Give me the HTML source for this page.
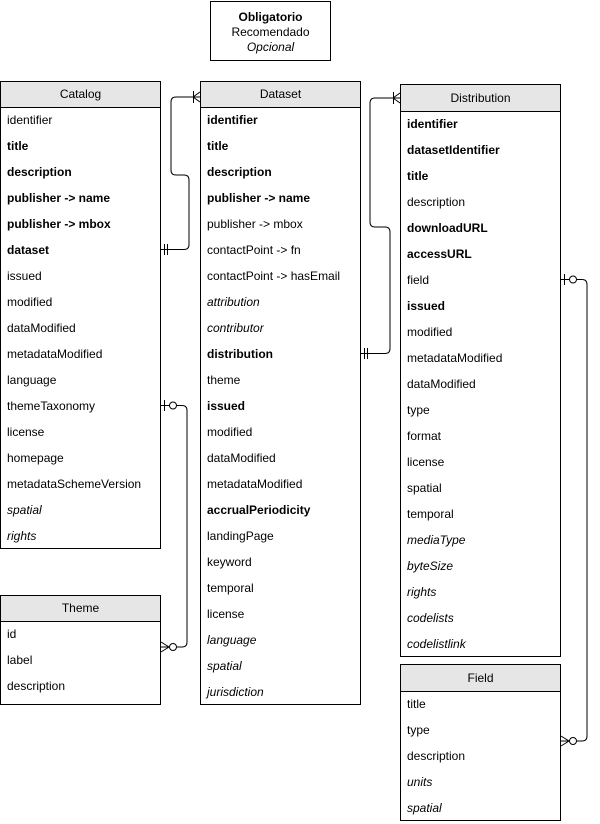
<!DOCTYPE html>
<html><head><meta charset="utf-8"><style>
body{margin:0;width:600px;height:824px;background:#fff;position:relative;font-family:"Liberation Sans",Arial,sans-serif;font-size:12px;color:#000;overflow:hidden}
.t{position:absolute;border:1px solid #000;background:#fff;box-sizing:border-box}
.h{height:25px;line-height:25px;text-align:center;background:#e6e6e6;border-bottom:1px solid #000;font-size:12px}
.r{height:26px;line-height:24px;padding-left:6px;white-space:nowrap}
.b{font-weight:bold}.i{font-style:italic}
.leg{position:absolute;left:210px;top:1px;width:121px;height:60px;border:1px solid #000;box-sizing:border-box;text-align:center;line-height:15px;padding-top:8px}
svg{position:absolute;left:0;top:0}
</style></head><body>
<div class="leg"><div class="b">Obligatorio</div><div>Recomendado</div><div class="i">Opcional</div></div>

<div class="t" style="left:0;top:81px;width:161px;height:468px"><div class="h">Catalog</div>
<div class="r">identifier</div><div class="r b">title</div><div class="r b">description</div><div class="r b">publisher -&gt; name</div><div class="r b">publisher -&gt; mbox</div><div class="r b">dataset</div><div class="r">issued</div><div class="r">modified</div><div class="r">dataModified</div><div class="r">metadataModified</div><div class="r">language</div><div class="r">themeTaxonomy</div><div class="r">license</div><div class="r">homepage</div><div class="r">metadataSchemeVersion</div><div class="r i">spatial</div><div class="r i">rights</div></div>

<div class="t" style="left:0;top:595px;width:161px;height:110px"><div class="h">Theme</div>
<div class="r">id</div><div class="r">label</div><div class="r">description</div></div>

<div class="t" style="left:200px;top:81px;width:161px;height:624px"><div class="h">Dataset</div>
<div class="r b">identifier</div><div class="r b">title</div><div class="r b">description</div><div class="r b">publisher -&gt; name</div><div class="r">publisher -&gt; mbox</div><div class="r">contactPoint -&gt; fn</div><div class="r">contactPoint -&gt; hasEmail</div><div class="r i">attribution</div><div class="r i">contributor</div><div class="r b">distribution</div><div class="r">theme</div><div class="r b">issued</div><div class="r">modified</div><div class="r">dataModified</div><div class="r">metadataModified</div><div class="r b">accrualPeriodicity</div><div class="r">landingPage</div><div class="r">keyword</div><div class="r">temporal</div><div class="r">license</div><div class="r i">language</div><div class="r i">spatial</div><div class="r i">jurisdiction</div></div>

<div class="t" style="left:400px;top:84px;width:161px;height:573px"><div class="h" style="height:26px;line-height:26px">Distribution</div>
<div class="r b">identifier</div><div class="r b">datasetIdentifier</div><div class="r b">title</div><div class="r">description</div><div class="r b">downloadURL</div><div class="r b">accessURL</div><div class="r">field</div><div class="r b">issued</div><div class="r">modified</div><div class="r">metadataModified</div><div class="r">dataModified</div><div class="r">type</div><div class="r">format</div><div class="r">license</div><div class="r">spatial</div><div class="r">temporal</div><div class="r i">mediaType</div><div class="r i">byteSize</div><div class="r i">rights</div><div class="r i">codelists</div><div class="r i">codelistlink</div></div>

<div class="t" style="left:400px;top:664px;width:161px;height:157px"><div class="h" style="height:26px;line-height:26px">Field</div>
<div class="r">title</div><div class="r">type</div><div class="r">description</div><div class="r i">units</div><div class="r i">spatial</div></div>

<svg width="600" height="824" fill="none" stroke="#000" stroke-width="1">
<path d="M161,249.5 H184 q5,0 5,-5 V180 q0,-5 -5,-5 H176 q-5,0 -5,-5 V102 q0,-5 5,-5 H200"/>
<path d="M164.5,244 v11 M167.5,244 v11"/>
<path d="M193.5,91 v12 M193,97 L200,92 M193,97 L200,102"/>
<path d="M361,353.5 H385 q5,0 5,-5 V232 q0,-5 -5,-5 H375 q-5,0 -5,-5 V103 q0,-5 5,-5 H400"/>
<path d="M364.5,348 v11 M367.5,348 v11"/>
<path d="M393.5,92 v12 M393,98 L400,93 M393,98 L400,103"/>
<path d="M161,405.5 H169 M177,405.5 H182 q5,0 5,5 V642 q0,5 -5,5 H177 M169,647 H161"/>
<path d="M164.5,400 v11"/><circle cx="173" cy="405.5" r="3.5"/>
<circle cx="173" cy="647" r="3.5"/><path d="M161,642 L169,647 L161,652"/>
<path d="M561,279.5 H569 M577,279.5 H582 q5,0 5,5 V736 q0,5 -5,5 H577 M569,741 H561"/>
<path d="M564.5,274 v11"/><circle cx="573" cy="279.5" r="3.5"/>
<circle cx="573" cy="741" r="3.5"/><path d="M561,736 L569,741 L561,746"/>
</svg>
</body></html>
